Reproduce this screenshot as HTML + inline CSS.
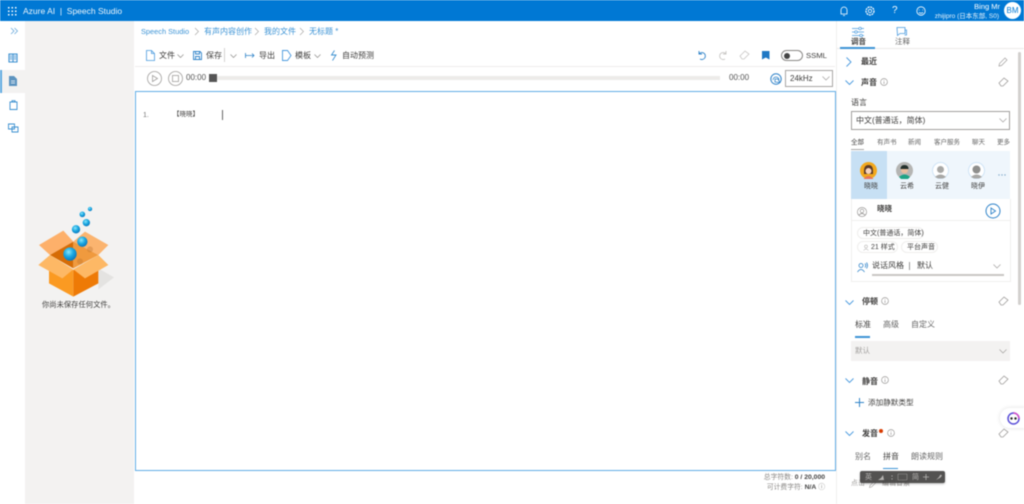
<!DOCTYPE html>
<html><head><meta charset="utf-8"><style>
html,body{margin:0;padding:0;background:#fff}
#p{position:relative;width:1024px;height:504px;overflow:hidden;background:#fff;font-family:"Liberation Sans","Noto Sans CJK SC",sans-serif;font-size:8px;color:#3f3e3d;filter:blur(.5px)}
.a{position:absolute;white-space:nowrap;line-height:1}
.b{position:absolute}
svg{position:absolute;overflow:visible}
svg *{fill:none}
.g{font-weight:bold;font-size:8px}
</style></head><body><div id="p">
<div class="b" style="left:0;top:0;width:1024px;height:21px;background:#0078d4"></div>
<svg style="left:8px;top:7px" width="9" height="9"><rect x="0" y="0" width="1.5" height="1.5" style="fill:#fff"/><rect x="3.500" y="0" width="1.5" height="1.5" style="fill:#fff"/><rect x="7" y="0" width="1.5" height="1.5" style="fill:#fff"/><rect x="0" y="3.500" width="1.5" height="1.5" style="fill:#fff"/><rect x="3.500" y="3.500" width="1.5" height="1.5" style="fill:#fff"/><rect x="7" y="3.500" width="1.5" height="1.5" style="fill:#fff"/><rect x="0" y="7" width="1.5" height="1.5" style="fill:#fff"/><rect x="3.500" y="7" width="1.5" height="1.5" style="fill:#fff"/><rect x="7" y="7" width="1.5" height="1.5" style="fill:#fff"/></svg>
<div class="a" style="left:23px;top:7px;color:#fff;font-size:8.500px;opacity:.92">Azure AI &nbsp;|&nbsp; Speech Studio</div>
<svg style="left:839px;top:6px" width="10" height="11"><path d="M2 8V4a3 3 0 0 1 6 0v4zM4 9.500h2" stroke="#fff" stroke-width=".8"/></svg>
<svg style="left:865px;top:6px" width="10" height="10"><circle cx="5" cy="5" r="4" stroke="#fff" stroke-width="1.200" stroke-dasharray="2 .7"/><circle cx="5" cy="5" r="1.700" stroke="#fff" stroke-width=".8"/></svg>
<div class="a" style="left:892px;top:6px;color:#fff;font-size:10px">?</div>
<svg style="left:916px;top:6px" width="10" height="10"><circle cx="5" cy="5" r="4.200" stroke="#fff" stroke-width=".8"/><path d="M3 6.500q2 1.500 4 0M3.200 3.600v.8M6.800 3.600v.8" stroke="#fff" stroke-width=".8"/></svg>
<div class="a" style="right:24px;top:3px;color:#fff;font-size:7.500px">Bing Mr</div>
<div class="a" style="right:25px;top:13.500px;color:#fff;font-size:6.500px;opacity:.9">zhijipro (日本东部, S0)</div>
<div class="b" style="left:1004px;top:2px;width:17px;height:17px;border-radius:50%;background:#fff;color:#0078d4;font-size:8px;line-height:17px;text-align:center">BM</div>

<div class="b" style="left:25px;top:21px;width:109px;height:483px;background:#f3f2f1"></div>
<svg style="left:10px;top:27px" width="9" height="8"><path d="M1 1l3 3-3 3M4.500 1l3 3-3 3" stroke="#6aa9dc" stroke-width=".8"/></svg>
<svg style="left:8px;top:53px" width="10" height="10"><path d="M1 1h8v8H1zM5 1v8" stroke="#3a8fd0" stroke-width="1.100"/><path d="M2 2h2v5H2zM6 2h2v5H6z" style="fill:#9cc6e8"/></svg>
<div class="b" style="left:0;top:70px;width:25px;height:23px;background:#f3f2f1"></div>
<div class="b" style="left:0;top:70px;width:2px;height:23px;background:#5ba8e0"></div>
<svg style="left:9px;top:76px" width="8" height="10"><path d="M0 0h5l3 3v7H0z" style="fill:#5c93bf"/><path d="M2 5h4M2 7h4" stroke="#fff" stroke-width=".7"/></svg>
<svg style="left:9px;top:100px" width="9" height="10"><path d="M1 2h7v7.500H1zM3 2V.7h3V2" stroke="#3a8fd0" stroke-width=".9"/></svg>
<svg style="left:8px;top:123px" width="11" height="10"><path d="M.5 1h6v5h-6zM4 4h6v5H4z" stroke="#3a8fd0" stroke-width=".9"/></svg>

<!-- box -->
<svg style="left:30px;top:200px" width="90" height="100" viewBox="0 0 270 300">
<defs>
<radialGradient id="s" cx=".4" cy=".35" r=".7"><stop offset="0" stop-color="#8ae6fb"/><stop offset=".5" stop-color="#1aa8e2"/><stop offset="1" stop-color="#0a72b8"/></radialGradient>
</defs>
<path d="M205 205L252 232 205 268z" style="fill:#e4e3e1"/>
<path d="M27 135L100 92 130 125 60 165z" style="fill:#fdb06a"/>
<path d="M165 95L235 135 205 165 130 125z" style="fill:#fbb46f"/>
<path d="M60 165L130 125V205z" style="fill:#d66c05"/>
<path d="M130 125L205 165 130 205z" style="fill:#f09a3e"/>
<path d="M57 190L130 210V290L57 250z" style="fill:#fb9a22"/>
<path d="M130 210L205 190V250L130 290z" style="fill:#ee7a06"/>
<path d="M25 195L60 165 130 208 97 235z" style="fill:#fdb865"/>
<path d="M235 195L205 165 130 208 165 235z" style="fill:#fdb865"/>
<circle cx="180" cy="148" r="9" style="fill:#b9712c;opacity:.35"/>
<circle cx="150" cy="184" r="9" style="fill:#b9712c;opacity:.35"/>
<circle cx="120" cy="162" r="20" style="fill:url(#s)"/>
<circle cx="157" cy="125" r="15.500" style="fill:url(#s)"/>
<circle cx="138" cy="88" r="12.500" style="fill:url(#s)"/>
<circle cx="169" cy="68" r="11" style="fill:url(#s)"/>
<circle cx="157" cy="43" r="8.500" style="fill:url(#s)"/>
<circle cx="180" cy="27" r="6.500" style="fill:url(#s)"/>
</svg>
<div class="a" style="left:42px;top:301px;font-size:7.300px">你尚未保存任何文件。</div>

<!-- breadcrumb -->
<div class="a" style="left:141px;top:27.500px;font-size:7.400px;color:#3d94d6">Speech Studio</div>
<div class="a" style="left:204px;top:27.500px;font-size:8px;color:#3d94d6">有声内容创作</div>
<div class="a" style="left:264px;top:27.500px;font-size:8px;color:#3d94d6">我的文件</div>
<div class="a" style="left:309px;top:27.500px;font-size:8px;color:#3d94d6">无标题 *</div>
<svg style="left:195px;top:28px" width="130" height="8"><path d="M0 0l3.500 3.500-3.500 3.500M60 0l3.500 3.500-3.500 3.500M105 0l3.500 3.500-3.500 3.500" stroke="#a19f9d" stroke-width=".6"/></svg>

<!-- toolbar -->
<svg style="left:146px;top:50px" width="9" height="11"><path d="M.5.500h5l3 3v7h-8zM5.500.500v3h3" stroke="#4a9ade" stroke-width=".8"/></svg>
<div class="a" style="left:159px;top:51.500px">文件</div>
<svg style="left:177px;top:53.500px" width="7" height="5"><path d="M.5.500l3 3 3-3" stroke="#8a8886" stroke-width=".7"/></svg>
<svg style="left:193px;top:51px" width="9" height="9"><path d="M.5.500h6.500l1.500 1.500v6.500h-8zM2.500.500v2.500h4v-2.500M2.500 8.500v-3h4v3" stroke="#2f83c9" stroke-width=".9"/></svg>
<div class="a" style="left:206px;top:51.500px">保存</div>
<div class="b" style="left:224px;top:48px;width:1px;height:14px;background:#d5d3d1"></div>
<svg style="left:230px;top:53.500px" width="7" height="5"><path d="M.5.500l3 3 3-3" stroke="#8a8886" stroke-width=".7"/></svg>
<svg style="left:245px;top:52px" width="10" height="7"><path d="M.5 1v5M.5 3.500h8.500M7 1.500l2 2-2 2" stroke="#2f83c9" stroke-width=".8"/></svg>
<div class="a" style="left:259px;top:51.500px">导出</div>
<svg style="left:282px;top:50px" width="10" height="11"><path d="M.5.500h5l3.500 5-3.500 5h-5z" stroke="#4a9ade" stroke-width=".9"/></svg>
<div class="a" style="left:295px;top:51.500px">模板</div>
<svg style="left:314px;top:53.500px" width="7" height="5"><path d="M.5.500l3 3 3-3" stroke="#8a8886" stroke-width=".7"/></svg>
<svg style="left:330px;top:50px" width="8" height="11"><path d="M4.500.500L1.500 5h4.500l-3.500 5.500" stroke="#3a8fd0" stroke-width=".9"/></svg>
<div class="a" style="left:342px;top:51.500px">自动预测</div>

<svg style="left:697px;top:50px" width="10" height="10"><path d="M2 1v3h3M2 4a3.500 3.500 0 1 1 1 5" stroke="#2f83c9" stroke-width=".9"/></svg>
<svg style="left:718px;top:50px" width="10" height="10"><path d="M8 1v3H5M8 4a3.500 3.500 0 1 0-1 5" stroke="#c8c6c4" stroke-width=".9"/></svg>
<svg style="left:739px;top:50px" width="11" height="10"><path d="M1 6l5-5 4 3-5 5H3z" stroke="#c8c6c4" stroke-width=".8"/></svg>
<svg style="left:762px;top:51px" width="8" height="9"><path d="M0 0h7.500v8.500l-3.700-2-3.800 2z" style="fill:#1f78c4"/></svg>
<div class="b" style="left:781px;top:50px;width:22px;height:11px;border:1px solid #8a8886;border-radius:6px;box-sizing:border-box"></div>
<div class="b" style="left:784px;top:52.500px;width:6px;height:6px;border-radius:50%;background:#444"></div>
<div class="a" style="left:806px;top:51.500px;font-size:7.700px">SSML</div>
<div class="b" style="left:135px;top:66px;width:700px;height:1px;background:#eeedec"></div>

<!-- player -->
<svg style="left:147px;top:71px" width="16" height="16"><circle cx="7.500" cy="7.500" r="7" stroke="#a19f9d" stroke-width=".8"/><path d="M5.500 4.500l5 3-5 3z" stroke="#a19f9d" stroke-width=".8"/></svg>
<svg style="left:168px;top:71px" width="16" height="16"><circle cx="7.500" cy="7.500" r="7" stroke="#a19f9d" stroke-width=".8"/><rect x="4.500" y="4.500" width="6" height="6" stroke="#a19f9d" stroke-width=".8"/></svg>
<div class="a" style="left:186px;top:73.500px;font-size:8px;color:#555">00:00</div>
<div class="b" style="left:209px;top:74px;width:8px;height:8px;background:#555"></div>
<div class="b" style="left:217px;top:76px;width:503px;height:4px;background:#edebe9"></div>
<div class="a" style="left:729px;top:73.500px;font-size:8px;color:#555">00:00</div>
<svg style="left:770px;top:73px" width="12" height="12"><circle cx="6" cy="6" r="5.200" stroke="#2f83c9" stroke-width="1"/><path d="M3 7a3 3 0 0 1 6 0M5 9V6h3l2 3.500z" stroke="#2f83c9" stroke-width=".8"/></svg>
<div class="b" style="left:785px;top:70px;width:48px;height:17px;border:1px solid #a8a6a4;box-sizing:border-box"></div>
<div class="a" style="left:790px;top:74.500px;font-size:8px">24kHz</div>
<svg style="left:822px;top:76px" width="8" height="5"><path d="M.5.500l3.500 3.500 3.500-3.500" stroke="#a19f9d" stroke-width=".7"/></svg>

<!-- editor -->
<div class="b" style="left:135px;top:91px;width:701px;height:380px;border:1px solid #62ade6;box-sizing:border-box"></div>
<div class="a" style="left:143px;top:112px;font-size:7px;color:#777">1.</div>
<div class="a" style="left:173px;top:111.500px;font-size:6.500px">【晓晓】</div>
<div class="b" style="left:222px;top:110px;width:1px;height:10px;background:#666"></div>
<div class="a" style="right:199px;top:475px;font-size:6.800px;color:#8a8886">总字符数: <b style="color:#444">0 / 20,000</b></div>
<div class="a" style="right:199px;top:485px;font-size:6.800px;color:#8a8886">可计费字符: <b style="color:#444">N/A</b> ⓘ</div>

<!-- right panel -->
<div class="b" style="left:836px;top:21px;width:1px;height:483px;background:#f0efee"></div>
<div class="b" style="left:837px;top:48px;width:187px;height:1px;background:#edebe9"></div>
<svg style="left:852px;top:27px" width="13" height="10"><path d="M0 1.500h12M0 5h12M0 8.500h12" stroke="#4a9ade" stroke-width=".8"/><circle cx="8" cy="1.500" r="1.300" style="fill:#fff" stroke="#4a9ade" stroke-width=".7"/><circle cx="4" cy="5" r="1.300" style="fill:#fff" stroke="#4a9ade" stroke-width=".7"/><circle cx="9" cy="8.500" r="1.300" style="fill:#fff" stroke="#4a9ade" stroke-width=".7"/></svg>
<svg style="left:896px;top:27px" width="11" height="10"><path d="M1 .5h8v6H4L1.500 8.500zM9 3h1.500v5h-2" stroke="#4a9ade" stroke-width=".8"/></svg>
<div class="a g" style="left:851px;top:37.500px;font-size:7.500px;color:#444">调音</div>
<div class="a" style="left:895px;top:37.500px;font-size:7.500px;color:#666">注释</div>
<div class="b" style="left:840px;top:47px;width:35px;height:1.500px;background:#3d94d6"></div>
<div class="b" style="left:1018px;top:52px;width:3px;height:253px;background:#d2d0ce;border-radius:2px"></div>

<svg style="left:846px;top:57px" width="7" height="10"><path d="M.5.500l4.500 4.500-4.500 4.500" stroke="#4a9ade" stroke-width=".9"/></svg>
<div class="a g" style="left:861px;top:58px">最近</div>
<svg style="left:998px;top:57px" width="10" height="10"><path d="M1 9l.5-2.500 5.500-5.500 2 2-5.500 5.500z" stroke="#a19f9d" stroke-width=".7"/></svg>
<svg style="left:845px;top:80px" width="9" height="6"><path d="M.5.500l4 4 4-4" stroke="#4a9ade" stroke-width=".9"/></svg>
<div class="a g" style="left:861px;top:79px">声音</div>
<svg style="left:880px;top:78px" width="8" height="8"><circle cx="4" cy="4" r="3.400" stroke="#8a8886" stroke-width=".6"/><path d="M4 3.500v2.500M4 2v.8" stroke="#8a8886" stroke-width=".6"/></svg>
<svg style="left:998px;top:77px" width="11" height="10"><path d="M1 6l5-5 4 3-5 5H3z" stroke="#a19f9d" stroke-width=".8"/></svg>
<div class="a" style="left:851px;top:99px;font-size:8px">语言</div>
<div class="b" style="left:851px;top:111px;width:159px;height:19px;border:1px solid #a19f9d;box-sizing:border-box"></div>
<div class="a" style="left:856px;top:117px">中文(普通话，简体)</div>
<svg style="left:999px;top:118px" width="8" height="5"><path d="M.5.500l3.500 3.500 3.500-3.500" stroke="#a19f9d" stroke-width=".7"/></svg>
<div class="a" style="left:851px;top:139.500px;font-size:6.500px">全部</div>
<div class="a" style="left:877px;top:139.500px;font-size:6.500px;color:#666">有声书</div>
<div class="a" style="left:908px;top:139.500px;font-size:6.500px;color:#666">新闻</div>
<div class="a" style="left:934px;top:139.500px;font-size:6.500px;color:#666">客户服务</div>
<div class="a" style="left:972px;top:139.500px;font-size:6.500px;color:#666">聊天</div>
<div class="a" style="left:997px;top:139.500px;font-size:6.500px;color:#666">更多</div>
<div class="b" style="left:851px;top:149px;width:13px;height:1px;background:#aaa"></div>

<div class="b" style="left:851px;top:151px;width:159px;height:48px;background:#eff6fc"></div>
<div class="b" style="left:851px;top:151px;width:36px;height:48px;background:#c7e0f4"></div>
<svg style="left:860px;top:162px" width="18" height="18"><circle cx="8.500" cy="8.500" r="8.500" style="fill:#f2a81d"/><path d="M4 9q0-6 4.500-6T13 9v3H4z" style="fill:#5b3a29"/><circle cx="8.500" cy="9" r="3" style="fill:#f6d3bc"/><path d="M3.500 17q5-6 10 0" style="fill:#e8735a"/></svg>
<svg style="left:896px;top:162px" width="18" height="18"><circle cx="8.500" cy="8.500" r="8.500" style="fill:#b5b5b3"/><circle cx="8.500" cy="8" r="3.500" style="fill:#e9bd9e"/><path d="M4.500 7q0-4 4-4t4 4z" style="fill:#24302c"/><path d="M3 15q5.500-5 11 0l-2 2H5z" style="fill:#1ea386"/></svg>
<svg style="left:932px;top:162px" width="18" height="18"><circle cx="8.500" cy="8.500" r="8" style="fill:#fff" stroke="#cfe4f6"/><circle cx="8.500" cy="7.500" r="3.500" style="fill:#a8a8a6"/><path d="M3 15q5.500-5 11 0l-3 1.500H6z" style="fill:#a8a8a6"/></svg>
<svg style="left:968px;top:162px" width="18" height="18"><circle cx="8.500" cy="8.500" r="8" style="fill:#fff" stroke="#cfe4f6"/><circle cx="8.500" cy="7.500" r="4" style="fill:#8f8f8d"/><path d="M3 15q5.500-5 11 0l-3 1.500H6z" style="fill:#a8a8a6"/></svg>
<svg style="left:998px;top:174px" width="9" height="2"><circle cx="1" cy="1" r=".7" style="fill:#7da7c9"/><circle cx="4" cy="1" r=".7" style="fill:#7da7c9"/><circle cx="7" cy="1" r=".7" style="fill:#7da7c9"/></svg>
<div class="a" style="left:864px;top:183px;font-size:7px">晓晓</div>
<div class="a" style="left:900px;top:183px;font-size:7px">云希</div>
<div class="a" style="left:935px;top:183px;font-size:7px">云健</div>
<div class="a" style="left:971px;top:183px;font-size:7px">晓伊</div>

<div class="b" style="left:851px;top:199px;width:160px;height:83px;border:1px solid #f0efee;border-top:none;box-sizing:border-box"></div>
<div class="b" style="left:851px;top:220px;width:160px;height:1px;background:#f0efee"></div>
<svg style="left:857px;top:207px" width="10" height="10"><circle cx="5" cy="5" r="4.600" stroke="#8a8886" stroke-width=".6"/><circle cx="5" cy="4" r="1.800" stroke="#8a8886" stroke-width=".6"/><path d="M2 8q3-3 6 0" stroke="#8a8886" stroke-width=".6"/></svg>
<div class="a g" style="left:877px;top:205px;font-size:7.500px">晓晓</div>
<svg style="left:985px;top:203px" width="16" height="16"><circle cx="8" cy="8" r="7" stroke="#2f83c9" stroke-width="1"/><path d="M6 5l4.500 3L6 11z" stroke="#2f83c9" stroke-width=".9"/></svg>
<div class="b" style="left:857px;top:227px;width:67px;height:12px;border:1px solid #efeeed;border-radius:7px;box-sizing:border-box"></div>
<div class="a" style="left:863px;top:230px;font-size:7px">中文(普通话，简体)</div>
<div class="b" style="left:857px;top:241px;width:41px;height:12px;border:1px solid #efeeed;border-radius:7px;box-sizing:border-box"></div>
<div class="a" style="left:871px;top:243.500px;font-size:7px">21 样式</div>
<svg style="left:863px;top:244px" width="7" height="7"><circle cx="3" cy="2.500" r="1.500" stroke="#a19f9d" stroke-width=".5"/><path d="M.5 6.500q2.500-3 5 0" stroke="#a19f9d" stroke-width=".5"/></svg>
<div class="b" style="left:901px;top:241px;width:37px;height:12px;border:1px solid #efeeed;border-radius:7px;box-sizing:border-box"></div>
<div class="a" style="left:907px;top:243.500px;font-size:7px">平台声音</div>
<svg style="left:857px;top:262px" width="11" height="11"><circle cx="4" cy="3.500" r="2" stroke="#2f83c9" stroke-width=".8"/><path d="M.5 10q3.500-5 7 0M8 1.500q1.500 2 0 4M9.500.5q2 3 0 6" stroke="#2f83c9" stroke-width=".8"/></svg>
<div class="a" style="left:872px;top:262px;font-size:8px">说话风格</div>
<div class="b" style="left:909px;top:262px;width:1px;height:8px;background:#999"></div>
<div class="a" style="left:917px;top:262px;font-size:8px">默认</div>
<svg style="left:993px;top:264px" width="8" height="5"><path d="M.5.500l3.500 3.500 3.500-3.500" stroke="#a19f9d" stroke-width=".7"/></svg>
<div class="b" style="left:872px;top:274px;width:132px;height:1.500px;background:#c8c6c4"></div>

<svg style="left:845px;top:300px" width="9" height="6"><path d="M.5.500l4 4 4-4" stroke="#4a9ade" stroke-width=".9"/></svg>
<div class="a g" style="left:862px;top:298px">停顿</div>
<svg style="left:881px;top:297px" width="8" height="8"><circle cx="4" cy="4" r="3.400" stroke="#8a8886" stroke-width=".6"/><path d="M4 3.500v2.500M4 2v.8" stroke="#8a8886" stroke-width=".6"/></svg>
<svg style="left:998px;top:296px" width="11" height="10"><path d="M1 6l5-5 4 3-5 5H3z" stroke="#a19f9d" stroke-width=".8"/></svg>
<div class="a" style="left:855px;top:321px;font-size:8px">标准</div>
<div class="a" style="left:883px;top:321px;font-size:8px;color:#666">高级</div>
<div class="a" style="left:911px;top:321px;font-size:8px;color:#666">自定义</div>
<div class="b" style="left:855px;top:336px;width:15px;height:1.500px;background:#3d94d6"></div>
<div class="b" style="left:851px;top:341px;width:159px;height:20px;background:#f3f2f1"></div>
<div class="a" style="left:855px;top:347px;font-size:7.500px;color:#a19f9d">默认</div>
<svg style="left:999px;top:349px" width="8" height="5"><path d="M.5.500l3.500 3.500 3.500-3.500" stroke="#a19f9d" stroke-width=".7"/></svg>

<svg style="left:845px;top:378px" width="9" height="6"><path d="M.5.500l4 4 4-4" stroke="#4a9ade" stroke-width=".9"/></svg>
<div class="a g" style="left:862px;top:378px">静音</div>
<svg style="left:881px;top:376px" width="8" height="8"><circle cx="4" cy="4" r="3.400" stroke="#8a8886" stroke-width=".6"/><path d="M4 3.500v2.500M4 2v.8" stroke="#8a8886" stroke-width=".6"/></svg>
<svg style="left:998px;top:375px" width="11" height="10"><path d="M1 6l5-5 4 3-5 5H3z" stroke="#a19f9d" stroke-width=".8"/></svg>
<svg style="left:855px;top:398px" width="10" height="10"><path d="M4.500 0v9M0 4.500h9" stroke="#2f83c9" stroke-width="1"/></svg>
<div class="a" style="left:868px;top:399px;font-size:7.600px">添加静默类型</div>

<svg style="left:845px;top:431px" width="9" height="6"><path d="M.5.500l4 4 4-4" stroke="#4a9ade" stroke-width=".9"/></svg>
<div class="a g" style="left:862px;top:430px">发音</div>
<div class="b" style="left:878.500px;top:429px;width:4px;height:4px;border-radius:50%;background:#d83b01"></div>
<svg style="left:887px;top:429px" width="8" height="8"><circle cx="4" cy="4" r="3.400" stroke="#8a8886" stroke-width=".6"/><path d="M4 3.500v2.500M4 2v.8" stroke="#8a8886" stroke-width=".6"/></svg>
<svg style="left:998px;top:428px" width="11" height="10"><path d="M1 6l5-5 4 3-5 5H3z" stroke="#a19f9d" stroke-width=".8"/></svg>
<div class="a" style="left:855px;top:453px;font-size:8px;color:#666">别名</div>
<div class="a" style="left:883px;top:453px;font-size:8px">拼音</div>
<div class="a" style="left:911px;top:453px;font-size:8px;color:#666">朗读规则</div>
<div class="b" style="left:883px;top:467.500px;width:15px;height:1.500px;background:#3d94d6"></div>
<div class="a" style="left:851px;top:480px;font-size:7px;color:#a19f9d">点击</div>
<svg style="left:869px;top:480px" width="8" height="8"><path d="M.5 7.500l.5-2 4.500-4.500 1.500 1.500L2.500 7z" stroke="#a19f9d" stroke-width=".6"/></svg>
<div class="a" style="left:882px;top:480px;font-size:7px;color:#8a8886">编辑音素</div>

<div class="b" style="left:860px;top:471px;width:85px;height:12px;background:#464544;opacity:.93;border-radius:2px;box-shadow:0 1px 2px rgba(0,0,0,.3)"></div>
<div class="a" style="left:865px;top:473.500px;font-size:7px;color:#b5b3b1">英</div>
<svg style="left:878px;top:473px" width="66" height="9"><path d="M0 7h6l-1-5-2 3z" style="fill:#b5b3b1"/><circle cx="14" cy="3" r=".6" style="fill:#b5b3b1"/><circle cx="14" cy="6" r=".6" style="fill:#b5b3b1"/><rect x="20" y="1" width="9" height="6" stroke="#b5b3b1" stroke-width=".6" stroke-dasharray="1 .5"/><path d="M48 1v6M45 4h6" stroke="#b5b3b1" stroke-width=".8"/><path d="M58 7l3-3 1.500-2.500 1.500 1-1.500 2z" style="fill:#b5b3b1"/></svg>
<div class="a" style="left:912px;top:473.500px;font-size:7px;color:#b5b3b1">简</div>

<div class="b" style="left:1000px;top:408px;width:30px;height:20px;background:#fff;border-radius:10px 0 0 10px;box-shadow:0 0 5px rgba(0,0,0,.12)"></div>
<svg style="left:1007px;top:412px" width="13" height="13"><circle cx="6.500" cy="6.500" r="5.500" stroke="#5a4fd8" stroke-width="1.500"/><path d="M6.500 1a5.500 5.500 0 0 1 5.500 5.500" stroke="#d24fc8" stroke-width="1.500"/><circle cx="4.500" cy="6.500" r="1.200" style="fill:#222"/><circle cx="8.500" cy="6.500" r="1.200" style="fill:#222"/></svg>
</div></body></html>
